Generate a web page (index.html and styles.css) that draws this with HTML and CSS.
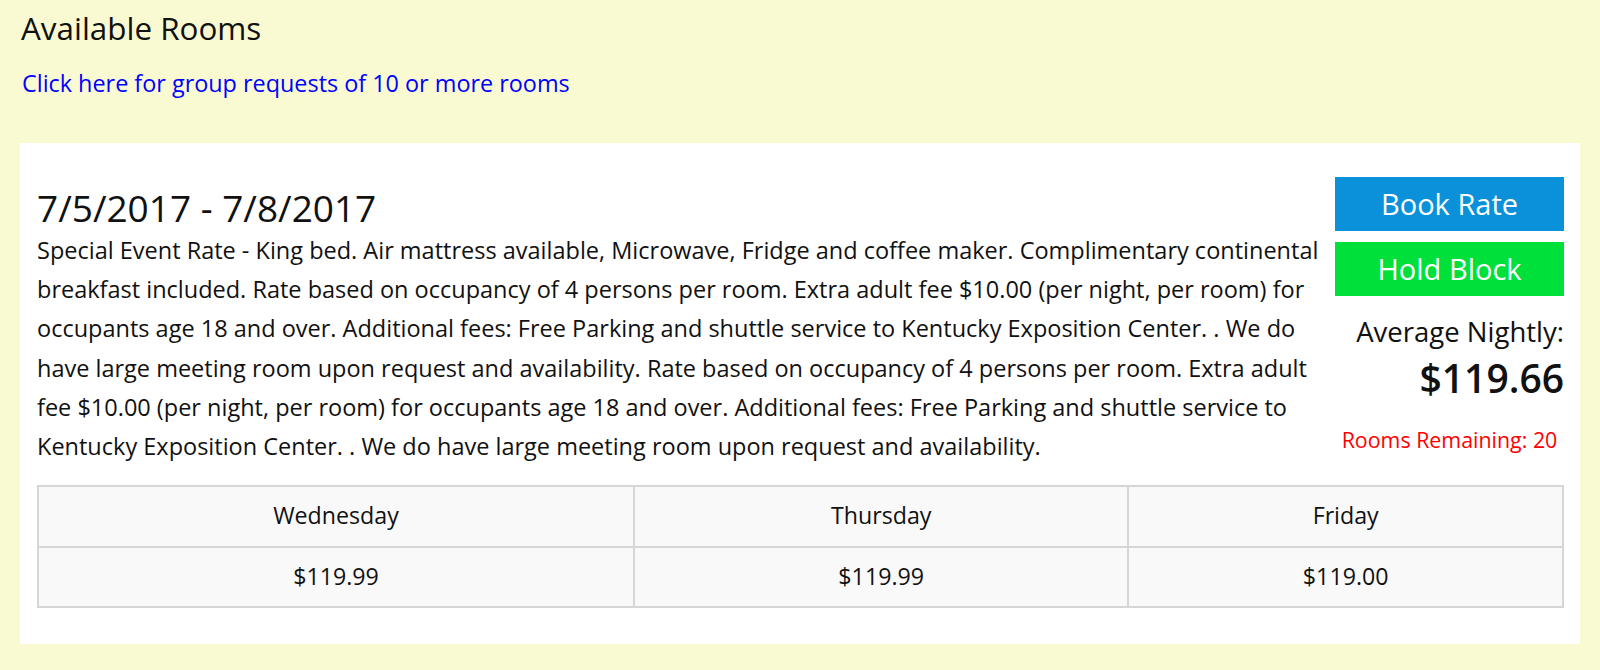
FILE: index.html
```html
<!DOCTYPE html>
<html>
<head>
<meta charset="utf-8">
<link rel="stylesheet" href="styles.css">
</head>
<body>
<h1 class="page-title">Available Rooms</h1>
<a class="group-link" href="#">Click here for group requests of 10 or more rooms</a>
<div class="card">
  <div class="card-top">
    <div class="card-main">
      <h2 class="dates">7/5/2017 - 7/8/2017</h2>
      <p class="desc">Special Event Rate - King bed. Air mattress available, Microwave, Fridge and coffee maker. Complimentary continental breakfast included. Rate based on occupancy of 4 persons per room. Extra adult fee $10.00 (per night, per room) for occupants age 18 and over. Additional fees: Free Parking and shuttle service to Kentucky Exposition Center. . We do have large meeting room upon request and availability. Rate based on occupancy of 4 persons per room. Extra adult fee $10.00 (per night, per room) for occupants age 18 and over. Additional fees: Free Parking and shuttle service to Kentucky Exposition Center. . We do have large meeting room upon request and availability.</p>
    </div>
    <div class="card-side">
      <a class="btn btn-book" href="#">Book Rate</a>
      <a class="btn btn-hold" href="#">Hold Block</a>
      <div class="avg-label">Average Nightly:</div>
      <div class="avg-price">$119.66</div>
      <div class="remaining">Rooms Remaining: 20</div>
    </div>
  </div>
  <table class="rates">
    <tr class="head-row"><td>Wednesday</td><td>Thursday</td><td>Friday</td></tr>
    <tr class="price-row"><td>$119.99</td><td>$119.99</td><td>$119.00</td></tr>
  </table>
</div>
</body>
</html>
```
FILE: styles.css
```css
html, body {
  margin: 0;
  padding: 0;
}
body {
  background: #fafad2;
  font-family: "Open Sans", "DejaVu Sans", sans-serif;
  color: #111;
  padding: 11px 20px 0 20px;
}
.page-title {
  font-size: 31.4px;
  font-weight: 400;
  line-height: 34px;
  margin: 0 0 0 1px;
}
.group-link {
  display: block;
  margin: 24px 0 0 2px;
  font-size: 23.4px;
  line-height: 28px;
  color: #0000ff;
  text-decoration: none;
}
.card {
  margin-top: 46px;
  background: #fff;
  padding: 34px 16px 36px 17px;
}
.card-top {
  display: flex;
  gap: 14px;
}
.card-main {
  flex: 1;
  padding-top: 9px;
}
.dates {
  font-size: 37px;
  font-weight: 400;
  line-height: 44px;
  margin: 0;
}
.desc {
  margin: 1px 0 0 0;
  font-size: 23.5px;
  line-height: 39.2px;
}
.card-side {
  width: 229px;
  flex: none;
  display: flex;
  flex-direction: column;
  text-align: right;
}
.btn {
  display: block;
  height: 54px;
  line-height: 54px;
  text-align: center;
  color: #fff;
  text-decoration: none;
  font-size: 29px;
}
.btn-book {
  background: #0a91d9;
}
.btn-hold {
  background: #00e03a;
  margin-top: 11px;
}
.avg-label {
  margin-top: 19px;
  font-size: 27.5px;
  line-height: 34px;
}
.avg-price {
  margin-top: 7px;
  font-size: 39px;
  font-weight: 600;
  line-height: 43px;
}
.remaining {
  margin-top: 29px;
  font-size: 21.4px;
  line-height: 24px;
  color: #ff0000;
  text-align: center;
}
.rates {
  width: 100%;
  margin-top: 19px;
  border-collapse: collapse;
  background: #f9f9f9;
  font-size: 23.2px;
}
.rates td {
  border: 2px solid #d6d6d6;
  text-align: center;
  padding: 0 10px;
}
.head-row td {
  height: 56px;
  padding-bottom: 3px;
}
.price-row td {
  height: 56px;
  padding-bottom: 2px;
}
```
